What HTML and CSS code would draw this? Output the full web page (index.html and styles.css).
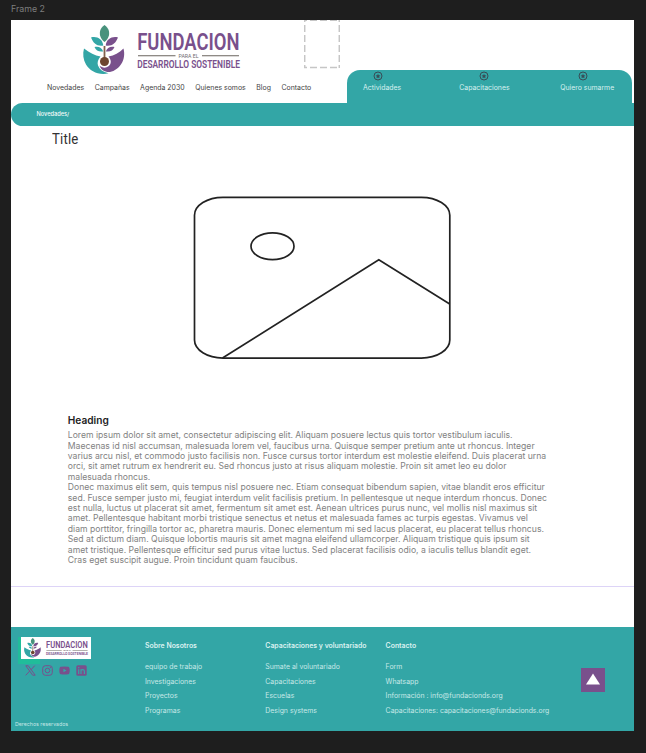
FILE: index.html
```html
<!DOCTYPE html>
<html lang="es">
<head>
<meta charset="utf-8">
<title>Fundación para el Desarrollo Sostenible</title>
<link rel="stylesheet" href="styles.css">
</head>
<body>
<svg class="defs" aria-hidden="true">
  <symbol id="logo" viewBox="83 25 157 49" preserveAspectRatio="none" overflow="visible">
    <path fill="#48927c" d="M104.500 25C108.800 28 109.700 32 108.900 35.500C108.200 38.500 106.500 40.500 104.500 42C102.500 40.500 100.800 38.500 100.100 35.500C99.300 32 100.200 28 104.500 25Z"/>
    <path fill="#33a6a6" d="M91 37.500C97 36 102.500 39 103.300 45.500C97 46.500 93.500 43.500 91 37.500ZM94.500 47C98.500 46 102 47.500 103.200 51.500C98.500 52 96 50.500 94.500 47Z"/>
    <path fill="#79508c" d="M118 37.500C112 36 106.500 39 105.700 45.500C112 46.500 115.500 43.500 118 37.500ZM114.500 47C110.500 46 107 47.500 105.800 51.500C110.500 52 113 50.500 114.500 47Z"/>
    <path fill="#33a6a6" d="M84 48.500C90 53 94.500 55.300 100.500 56.500C98 59.500 97 62.500 98 65.500C99.500 69.500 103 72 108.500 73.300C99 75.500 90 71.500 86 64.500C83.200 59.500 82.500 54 84 48.500Z"/>
    <path fill="#79508c" d="M123.500 48.500C119 53 114.500 55.300 108.500 56.500C111.500 60 111.500 64 108.500 66.300C105.500 68.500 102 67.800 99.500 65.500C100.500 69.500 104.500 72.300 110 72C119.500 70 126.500 60 123.500 48.500Z"/>
    <path stroke="#81604c" stroke-width="1.800" d="M104.500 46V59"/>
    <circle cx="104.500" cy="61.500" r="4.500" fill="#6d452f"/>
    <path fill="#6b655f" d="M138 55.200h37.500v1H138ZM202 55.200h37v1h-37Z"/>
    <text class="logo-name" x="137.200" y="50.200" textLength="102.300" lengthAdjust="spacingAndGlyphs">FUNDACION</text>
    <text class="logo-mid" x="178.500" y="57.500" textLength="20" lengthAdjust="spacingAndGlyphs">PARA EL</text>
    <text class="logo-sub" x="137.200" y="67.600" textLength="102.800" lengthAdjust="spacingAndGlyphs">DESARROLLO SOSTENIBLE</text>
  </symbol>
  <symbol id="target" viewBox="0 0 10 10">
    <circle cx="5" cy="5" r="4" fill="none" stroke="#384c56" stroke-width="1"/>
    <path fill="#384c56" d="M5 2.700L5.700 4.200L7.400 4.400L6.200 5.500L6.500 7.200L5 6.400L3.500 7.200L3.800 5.500L2.600 4.400L4.300 4.200Z"/>
  </symbol>
</svg>
<div class="frame-label">Frame 2</div>
<main class="frame">
  <header class="header">
    <div class="left">
      <svg class="logo"><use href="#logo"/></svg>
      <nav class="nav"><a>Novedades</a><a>Campañas</a><a>Agenda 2030</a><a>Quienes somos</a><a>Blog</a><a>Contacto</a></nav>
    </div>
    <svg class="slot" viewBox="0 0 36 49"><path d="M.7 0V48M35.300 0V48" stroke-dasharray="7 3" stroke-dashoffset="5"/><path d="M0 .3H36M0 47.500H36" stroke-dasharray="7 3" stroke-dashoffset="4"/></svg>
    <div class="tabs">
      <a class="tab tab-first"><svg><use href="#target"/></svg>Actividades</a>
      <a class="tab tab-mid"><svg><use href="#target"/></svg>Capacitaciones</a>
      <a class="tab"><svg><use href="#target"/></svg>Quiero sumarme</a>
    </div>
  </header>
  <div class="crumbs">Novedades/</div>
  <h1 class="title"><span>Title</span></h1>
  <svg class="picture" viewBox="0 0 258 164">
    <rect x="1.500" y="2.300" width="255.300" height="160.800" rx="28.500" ry="18"/>
    <ellipse cx="79.500" cy="51.300" rx="21.500" ry="13.400"/>
    <path d="M29.500 163L185.800 64.700L256.700 109"/>
  </svg>
  <article class="article">
    <h2>Heading</h2>
    <p>Lorem ipsum dolor sit amet, consectetur adipiscing elit. Aliquam posuere lectus quis tortor vestibulum iaculis.<br>Maecenas id nisl accumsan, malesuada lorem vel, faucibus urna. Quisque semper pretium ante ut rhoncus. Integer<br>varius arcu nisl, et commodo justo facilisis non. Fusce cursus tortor interdum est molestie eleifend. Duis placerat urna<br>orci, sit amet rutrum ex hendrerit eu. Sed rhoncus justo at risus aliquam molestie. Proin sit amet leo eu dolor<br>malesuada rhoncus.</p>
    <p>Donec maximus elit sem, quis tempus nisl posuere nec. Etiam consequat bibendum sapien, vitae blandit eros efficitur<br>sed. Fusce semper justo mi, feugiat interdum velit facilisis pretium. In pellentesque ut neque interdum rhoncus. Donec<br>est nulla, luctus ut placerat sit amet, fermentum sit amet est. Aenean ultrices purus nunc, vel mollis nisl maximus sit<br>amet. Pellentesque habitant morbi tristique senectus et netus et malesuada fames ac turpis egestas. Vivamus vel<br>diam porttitor, fringilla tortor ac, pharetra mauris. Donec elementum mi sed lacus placerat, eu placerat tellus rhoncus.<br>Sed at dictum diam. Quisque lobortis mauris sit amet magna eleifend ullamcorper. Aliquam tristique quis ipsum sit<br>amet tristique. Pellentesque efficitur sed purus vitae luctus. Sed placerat facilisis odio, a iaculis tellus blandit eget.<br>Cras eget suscipit augue. Proin tincidunt quam faucibus.</p>
  </article>
  <div class="rule"></div>
  <footer class="footer">
    <div class="brand">
      <div class="brand-back"><div class="brand-card"><svg><use href="#logo"/></svg></div></div>
      <div class="social">
        <svg viewBox="0 0 11 11"><path class="line" d="M.8.8H3.300L10.200 10.200H7.700ZM.7 10.300L4.900 5.900M6 4.800L9.700.7"/></svg>
        <svg viewBox="0 0 11 11"><rect class="line" x=".7" y=".7" width="9.600" height="9.600" rx="2.700"/><circle class="line" cx="5.500" cy="5.500" r="2.300"/><circle class="solid" cx="8.400" cy="2.600" r=".7"/></svg>
        <svg viewBox="0 0 11 11"><path class="solid" fill-rule="evenodd" d="M1.800 1.700Q5.500 1.200 9.200 1.700Q10.700 2 10.700 5.500T9.200 9.300Q5.500 9.800 1.800 9.300Q.3 9 .3 5.500T1.800 1.700ZM4.400 3.700V7.300L7.500 5.500Z"/></svg>
        <svg viewBox="0 0 11 11"><rect class="solid" x=".3" y=".3" width="10.400" height="10.400" rx="1.500"/><path class="cut" d="M2.700 4.300V9M2.700 2V3.300M5 9V4.300M5 6.200Q5 4.700 6.700 4.700T8.400 6.200V9"/></svg>
      </div>
      <div class="rights">Derechos reservados</div>
    </div>
    <div class="col"><h3>Sobre Nosotros</h3><a>equipo de trabajo</a><a>Investigaciones</a><a>Proyectos</a><a>Programas</a></div>
    <div class="col"><h3>Capacitaciones y voluntariado</h3><a>Sumate al voluntariado</a><a>Capacitaciones</a><a>Escuelas</a><a>Design systems</a></div>
    <div class="col wide"><h3>Contacto</h3><a>Form</a><a>Whatsapp</a><a>Información : info@fundacionds.org</a><a>Capacitaciones: capacitaciones@fundacionds.org</a></div>
    <div class="up"><svg viewBox="0 0 24 24"><path d="M12 5.500L19 16.500H5Z"/></svg></div>
  </footer>
</main>
</body>
</html>
```
FILE: styles.css
```css
* { box-sizing: border-box; }
body { margin: 0; height: 753px; overflow: hidden; background: #1e1e1e; font-family: Inter, "Liberation Sans", sans-serif; }
svg { display: block; flex: none; }
h1, h2, h3, p { margin: 0; }
.defs { position: absolute; width: 0; height: 0; }
.frame-label { height: 20px; padding: 3px 0 0 11px; font-size: 8.800px; line-height: 12px; color: #7d7d7d; }
.frame { display: flex; flex-direction: column; width: 623px; height: 711px; margin-left: 11px; background: #fff; }

.header { display: flex; height: 82.5px; flex: none; }
.left { width: 293.5px; flex: none; }
.logo { width: 157px; height: 49px; margin: 5px 0 0 72px; overflow: visible; }
.logo-name { font: 600 23px Roboto, sans-serif; fill: #79508c; }
.logo-mid { font: 400 4.600px Roboto, sans-serif; fill: #6f6b70; }
.logo-sub { font: 600 11px Roboto, sans-serif; fill: #79508c; }
.nav { display: flex; gap: 10.500px; margin: 9px 0 0 36px; font-size: 6.940px; line-height: 10px; color: #444; white-space: nowrap; }
.slot { width: 36px; height: 49px; margin: -.5px 0 0 -.5px; }
.slot path { fill: none; stroke: #c6c6c6; stroke-width: 1.500; }
.tabs { display: flex; align-items: flex-start; align-self: flex-end; width: 285px; height: 33px; margin-left: 7px; padding: 1px 0 0 16px; border-radius: 13px 13px 0 0; background: #33a6a6; }
.tab { display: flex; flex-direction: column; align-items: center; font-size: 6.920px; line-height: 10px; color: #d9f1f0; white-space: nowrap; }
.tab svg { width: 10px; height: 10px; margin-bottom: 2px; }
.tab-first svg { margin-left: -8px; }
.tab:last-child svg { margin-left: -8px; }
.tab-mid { margin: 0 50.500px 0 58px; }
.crumbs { height: 23.200px; flex: none; padding-left: 25.500px; border-radius: 12px 0 0 12px; background: #33a6a6; color: #f2fbfa; font-size: 5.650px; font-weight: 500; line-height: 23px; }
.title { height: 27px; margin-left: 41px; font: 400 15px/27px Roboto, sans-serif; color: #333; }
.title span { display: inline-block; transform: scaleX(.88); transform-origin: left; letter-spacing: .2px; }
.picture { width: 258px; height: 164px; margin: 42px 0 0 182px; fill: none; stroke: #222; stroke-width: 1.700; }
.article { margin: 55px 0 0 56.800px; color: #828282; font-size: 8.650px; line-height: 10.400px; white-space: nowrap; }
.article h2 { margin-bottom: 4.500px; font-size: 10.150px; line-height: 12px; font-weight: 600; color: #222; }
.rule { height: 1.200px; margin-top: auto; background: #ddd4f7; }

.footer { display: flex; height: 104.500px; margin-top: 39.500px; flex: none; background: #33a6a6; color: #c7e8e7; font-size: 6.910px; }
.brand { display: flex; flex-direction: column; width: 134px; flex: none; padding: 10px 0 3px 4px; }
.brand-back { width: 22px; height: 27px; margin-left: 3px; background: #20bd9a; }
.brand-card { width: 70px; height: 22.500px; margin-left: 3px; padding: 1.500px 3px; background: #fff; }
.brand-card svg { width: 64px; height: 19.500px; overflow: visible; }
.social { display: flex; gap: 6.300px; margin: 1.500px 0 0 9.500px; }
.social svg { width: 11px; height: 11px; }
.line { fill: none; stroke: #79508c; stroke-width: 1; }
.solid { fill: #79508c; }
.cut { fill: none; stroke: #33a6a6; stroke-width: 1.200; }
.rights { margin-top: auto; font-size: 5.250px; line-height: 7px; }
.col { width: 120.300px; flex: none; padding-top: 14px; white-space: nowrap; }
.col h3 { margin-bottom: 9.600px; font-size: 6.910px; line-height: 10px; font-weight: 600; color: #dcf2f1; }
.col a { display: block; line-height: 14.670px; }
.wide { width: 195.400px; }
.up { width: 24.300px; height: 24.300px; margin-top: 41.200px; background: #79508c; }
.up svg { width: 24px; height: 24px; fill: #fff; }
```
